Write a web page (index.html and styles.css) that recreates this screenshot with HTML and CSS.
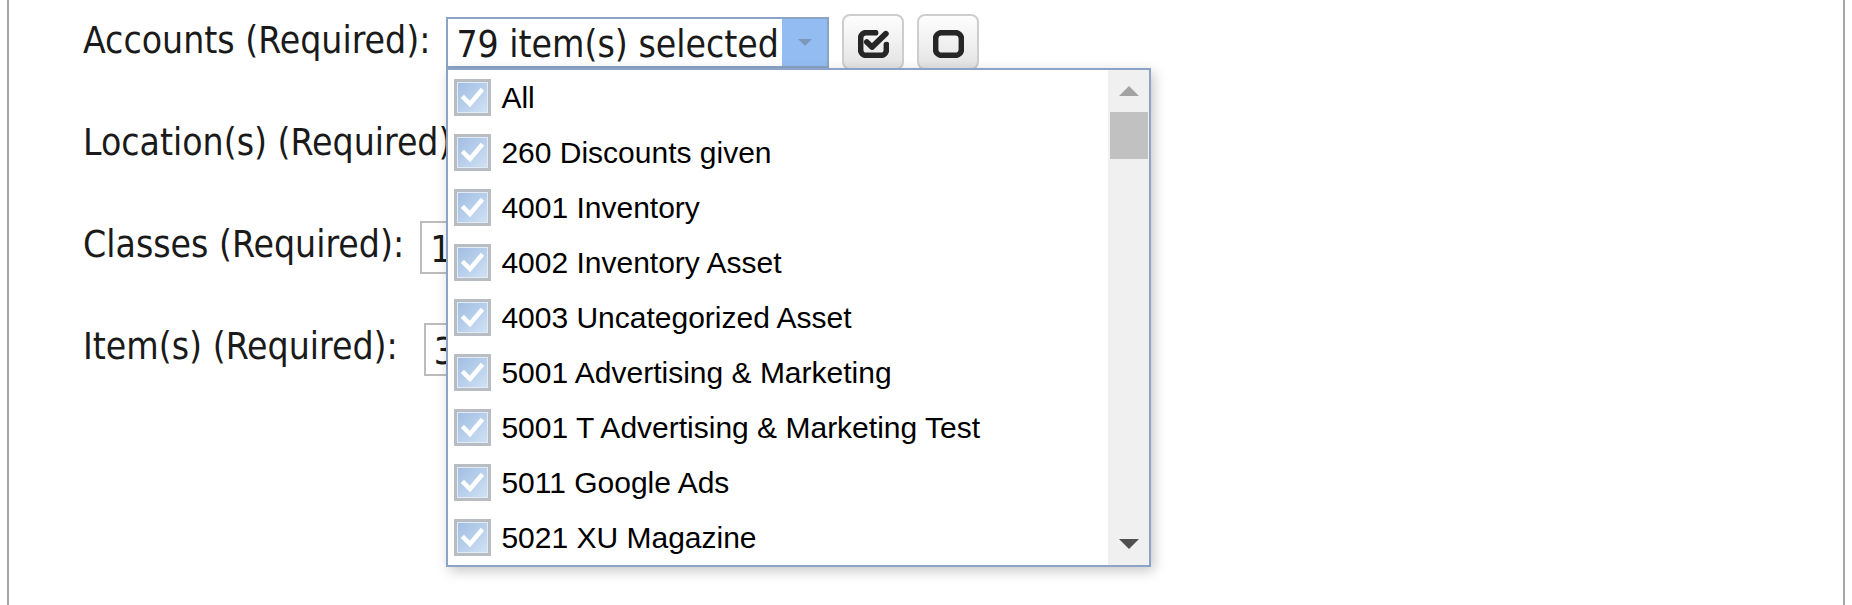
FILE: index.html
```html
<!DOCTYPE html>
<html>
<head>
<meta charset="utf-8">
<link rel="stylesheet" href="styles.css">
</head>
<body>
<div class="frame">
  <div class="form">
    <div class="row">
      <span class="label">Accounts (Required):</span>
      <div class="msel active">
        <span class="msel-text">79 item(s) selected</span>
        <span class="msel-arrow"><svg width="16" height="9" viewBox="0 0 16 9"><polygon points="1,1 15,1 8,8" fill="#7d97bb"/></svg></span>
        <div class="dropdown">
          <ul class="opts">
            <li><span class="cb"><svg viewBox="0 0 31 31"><path d="M7 16 L13 22 L24 9" /></svg></span>All</li>
            <li><span class="cb"><svg viewBox="0 0 31 31"><path d="M7 16 L13 22 L24 9" /></svg></span>260 Discounts given</li>
            <li><span class="cb"><svg viewBox="0 0 31 31"><path d="M7 16 L13 22 L24 9" /></svg></span>4001 Inventory</li>
            <li><span class="cb"><svg viewBox="0 0 31 31"><path d="M7 16 L13 22 L24 9" /></svg></span>4002 Inventory Asset</li>
            <li><span class="cb"><svg viewBox="0 0 31 31"><path d="M7 16 L13 22 L24 9" /></svg></span>4003 Uncategorized Asset</li>
            <li><span class="cb"><svg viewBox="0 0 31 31"><path d="M7 16 L13 22 L24 9" /></svg></span>5001 Advertising &amp; Marketing</li>
            <li><span class="cb"><svg viewBox="0 0 31 31"><path d="M7 16 L13 22 L24 9" /></svg></span>5001 T Advertising &amp; Marketing Test</li>
            <li><span class="cb"><svg viewBox="0 0 31 31"><path d="M7 16 L13 22 L24 9" /></svg></span>5011 Google Ads</li>
            <li><span class="cb"><svg viewBox="0 0 31 31"><path d="M7 16 L13 22 L24 9" /></svg></span>5021 XU Magazine</li>
          </ul>
          <div class="sbar">
            <div class="sb-btn"><svg width="20" height="10" viewBox="0 0 20 10"><polygon points="0,10 20,10 10,0" fill="#a3a3a3"/></svg></div>
            <div class="sb-thumb"></div>
            <div class="sb-space"></div>
            <div class="sb-btn"><svg width="20" height="10" viewBox="0 0 20 10"><polygon points="0,0 20,0 10,10" fill="#505050"/></svg></div>
          </div>
        </div>
      </div>
      <button class="ibtn" type="button"><svg width="31" height="28" viewBox="0 0 30 27"><path class="ico" d="M17 2.5 H8 A5.5 5.5 0 0 0 2.5 8 V19 A5.5 5.5 0 0 0 8 24.5 H22 A5.5 5.5 0 0 0 27.5 19 V14"/><path class="ico" d="M8.5 11.5 L13.5 16.5 L27 3.5"/></svg></button>
      <button class="ibtn" type="button"><svg width="31" height="28" viewBox="0 0 30 27"><rect class="ico" x="2.5" y="2.5" width="25" height="22" rx="6"/></svg></button>
    </div>
    <div class="row">
      <span class="label">Location(s) (Required):</span>
      <div class="msel">
        <span class="msel-text">5 item(s) selected</span>
        <span class="msel-arrow plain"></span>
      </div>
    </div>
    <div class="row">
      <span class="label">Classes (Required):</span>
      <div class="msel">
        <span class="msel-text">12 item(s) selected</span>
        <span class="msel-arrow plain"></span>
      </div>
    </div>
    <div class="row">
      <span class="label label-wide">Item(s) (Required):</span>
      <div class="msel">
        <span class="msel-text">34 item(s) selected</span>
        <span class="msel-arrow plain"></span>
      </div>
    </div>
  </div>
</div>
</body>
</html>
```

FILE: styles.css
```css
html, body {
  margin: 0;
  padding: 0;
  background: #ffffff;
}

body {
  width: 1852px;
  height: 605px;
  overflow: hidden;
}

.frame {
  margin: 0 7px;
  height: 605px;
  box-sizing: border-box;
  border-left: 2px solid #a6a6a6;
  border-right: 2px solid #a6a6a6;
  padding: 17px 0 0 74px;
  font-family: "DejaVu Sans Condensed", "DejaVu Sans", sans-serif;
  font-stretch: semi-condensed;
  font-size: 37px;
  color: #1a1a1a;
}

.form {
  display: flex;
  flex-direction: column;
  gap: 49px;
}

.row {
  display: flex;
  align-items: center;
  height: 53px;
  gap: 13px;
}

.label {
  white-space: nowrap;
  margin-right: 3px;
  padding-bottom: 6px;
}

.label-wide {
  margin-right: 13px;
}

.msel {
  position: relative;
  display: flex;
  align-items: stretch;
  width: 383px;
  height: 53px;
  box-sizing: border-box;
  border: 2px solid #bcbcbc;
  background: #ffffff;
}

.msel.active {
  height: 51px;
  align-self: flex-start;
  border-color: #8aa3c6;
}

.msel-text {
  flex: 1;
  display: flex;
  align-items: center;
  padding: 3px 0 0 8px;
  white-space: nowrap;
  overflow: hidden;
}

.msel-arrow {
  width: 45px;
  display: flex;
  align-items: center;
  justify-content: center;
  background: #93bdf2;
}

.msel-arrow.plain {
  background: #f0f0f0;
}

.dropdown {
  position: absolute;
  left: -2px;
  top: 49px;
  z-index: 10;
  width: 705px;
  height: 499px;
  box-sizing: border-box;
  border: 2px solid #8aa3c6;
  background: #ffffff;
  box-shadow: 3px 4px 12px rgba(0, 0, 0, 0.22);
  display: flex;
}

.opts {
  flex: 1;
  list-style: none;
  margin: 0;
  padding: 0;
  font-family: "Liberation Sans", Arial, sans-serif;
  font-stretch: normal;
  font-size: 30px;
  color: #000000;
}

.opts li {
  display: flex;
  align-items: center;
  height: 55px;
  padding-left: 6px;
  white-space: nowrap;
}

.cb {
  width: 37px;
  height: 37px;
  box-sizing: border-box;
  border: 3px solid #b8bcc3;
  margin-right: 10px;
  background: linear-gradient(135deg, #a0bde2 0%, #b7cfeb 50%, #d2e2f4 100%);
  box-shadow: inset 0 0 0 1px #e2eaf4;
  display: flex;
}

.cb svg {
  width: 31px;
  height: 31px;
}

.cb path {
  fill: none;
  stroke: #ffffff;
  stroke-width: 4.5;
  stroke-linecap: square;
  stroke-linejoin: miter;
}

.sbar {
  width: 41px;
  background: #f0f0f0;
  display: flex;
  flex-direction: column;
}

.sb-btn {
  height: 42px;
  display: flex;
  align-items: center;
  justify-content: center;
}

.sb-thumb {
  height: 47px;
  margin: 0 1px 0 2px;
  background: #c1c1c1;
}

.sb-space {
  flex: 1;
}

.ibtn {
  align-self: flex-start;
  margin-top: -3px;
  width: 62px;
  height: 56px;
  padding: 14px 0 0 0;
  box-sizing: border-box;
  border: 2px solid #cdcdcd;
  border-radius: 8px;
  background: linear-gradient(#fefefe, #e3e3e3);
  display: flex;
  justify-content: center;
  align-items: flex-start;
}

.ico {
  fill: none;
  stroke: #262626;
  stroke-width: 5.5;
  stroke-linecap: round;
  stroke-linejoin: round;
}
```
